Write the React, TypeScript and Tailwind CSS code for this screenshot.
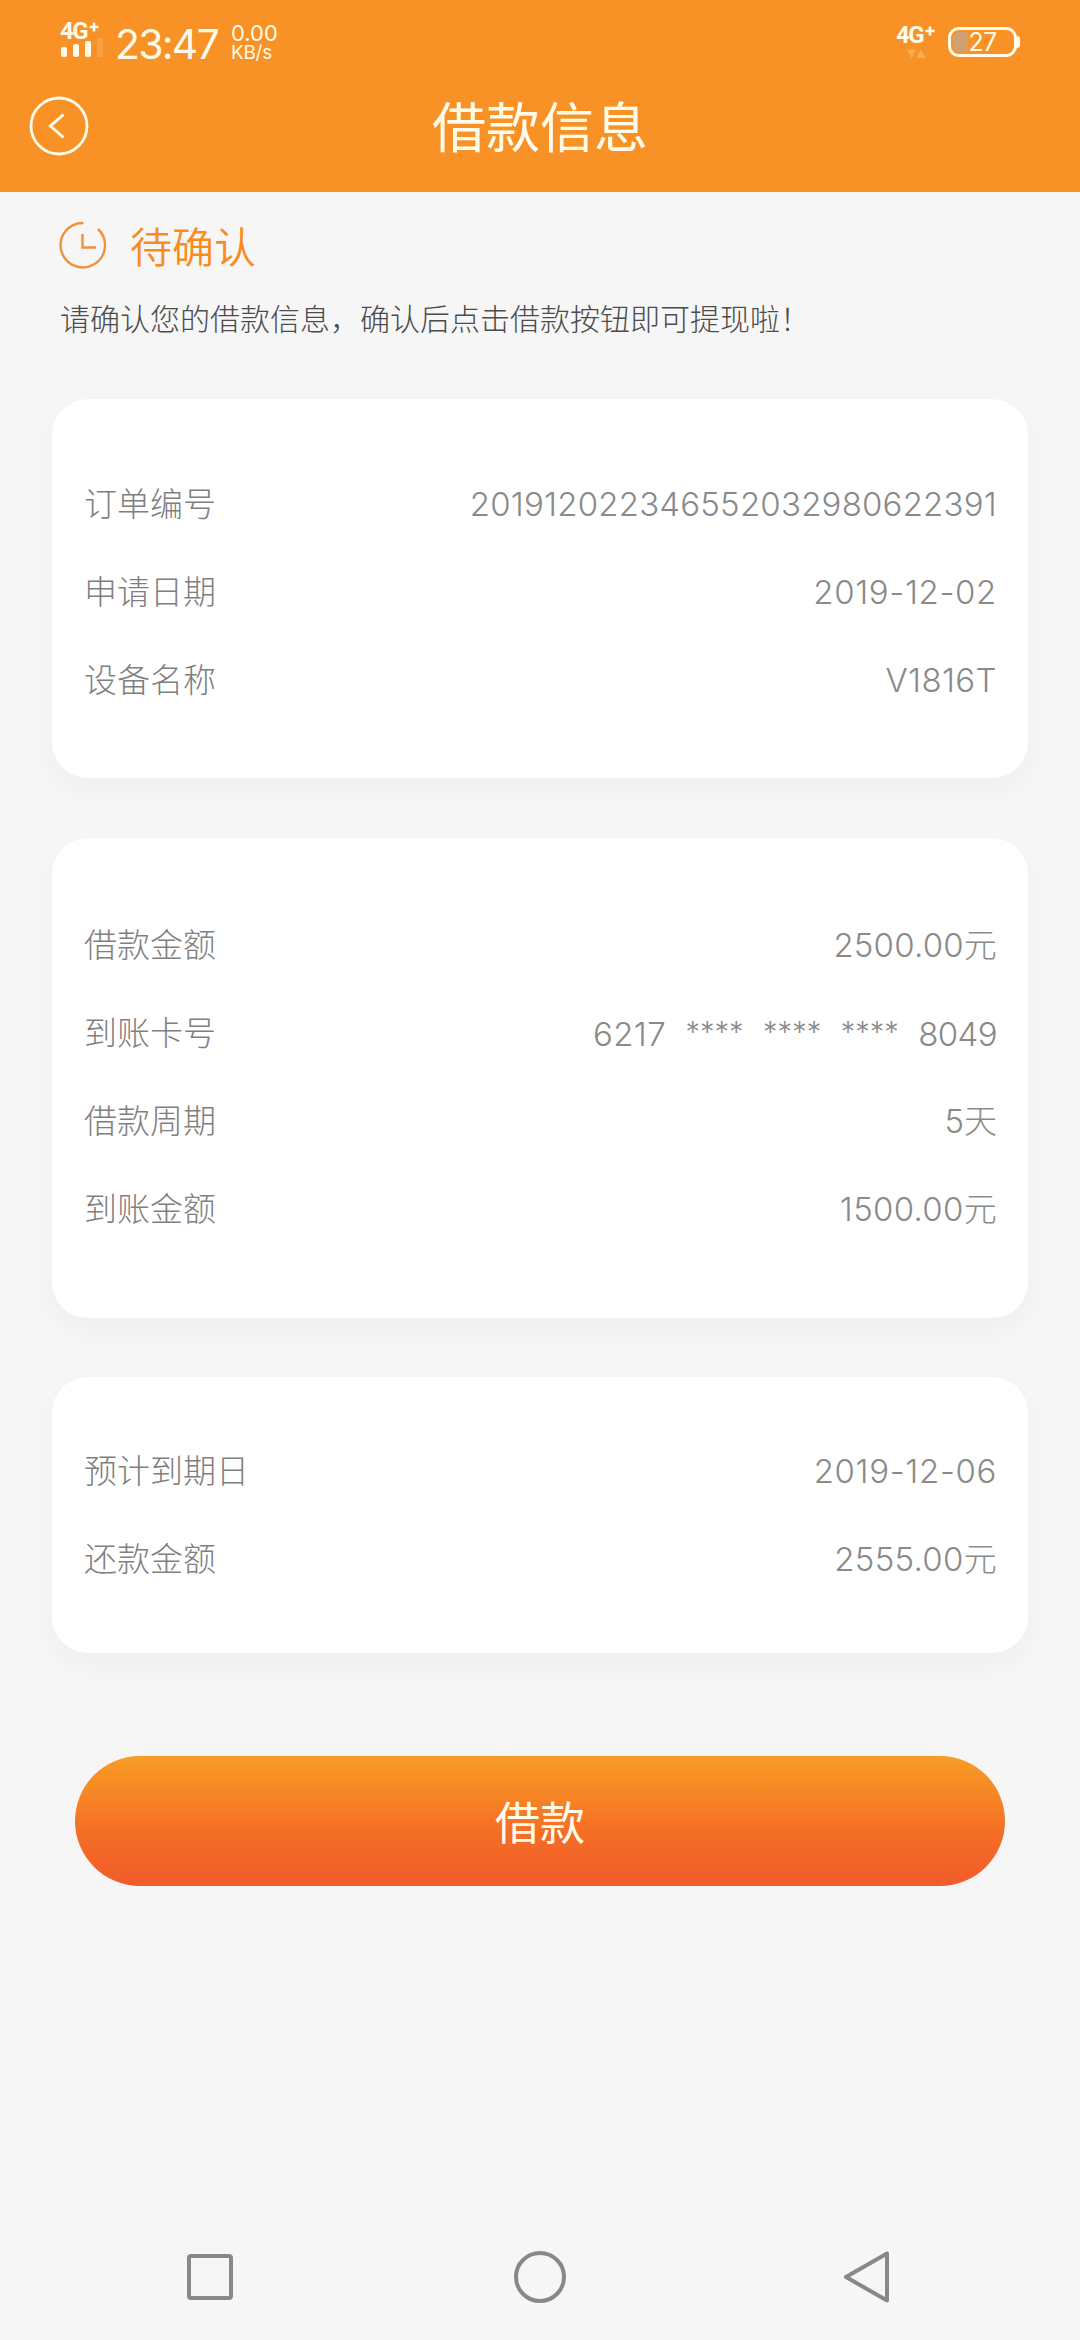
import { clsx } from 'clsx';

type Row = { label: string; value: string; className?: string };

const ORDER_ROWS: Row[] = [
  { label: '订单编号', value: '201912022346552032980622391', className: 'tracking-[0.2px]' },
  { label: '申请日期', value: '2019-12-02', className: 'tracking-[0.65px]' },
  { label: '设备名称', value: 'V1816T', className: 'tracking-[0.4px]' },
];

const LOAN_ROWS: Row[] = [
  { label: '借款金额', value: '2500.00元', className: 'tracking-[0.2px]' },
  { label: '到账卡号', value: '6217 **** **** **** 8049' },
  { label: '借款周期', value: '5天' },
  { label: '到账金额', value: '1500.00元', className: 'tracking-[0.3px]' },
];

const REPAY_ROWS: Row[] = [
  { label: '预计到期日', value: '2019-12-06', className: 'tracking-[0.65px]' },
  { label: '还款金额', value: '2555.00元', className: 'tracking-[0.3px]' },
];

function NetworkLabel() {
  return (
    <div className="flex h-[18px] items-start font-['Roboto'] font-bold">
      <span className="text-[24px] leading-[18px] tracking-[-1.5px]">4G</span>
      <svg width="10" height="10" viewBox="0 0 10 10" className="ml-0.5">
        <path d="M5 0.5v9M0.5 5h9" stroke="currentColor" strokeWidth="2.6" />
      </svg>
    </div>
  );
}

function StatusBar() {
  return (
    <div className="flex h-[84px] items-start justify-between pl-[60px] pr-[60px] font-['Inter']">
      <div className="flex items-start">
        <div className="w-[44px] pt-[22px]">
          <NetworkLabel />
          <svg width="44" height="20" viewBox="0 0 44 20" className="-mt-0.5" fill="currentColor">
            <rect x="1" y="9" width="6" height="10" rx="2" />
            <rect x="13" y="6" width="6" height="13" rx="2" />
            <rect x="25" y="3" width="6" height="16" rx="2" />
            <rect x="37" y="0" width="6" height="19" rx="1" opacity="0.15" />
          </svg>
        </div>
        <span className="mt-[24px] ml-[11px] w-[104px] text-[41px] leading-[40px] tracking-[-1.8px]">23:47</span>
        <div className="mt-[23px] ml-[12px] flex flex-col">
          <span className="text-[22px] leading-[20px]">0.00</span>
          <span className="text-[19px] leading-[20px] tracking-[-0.3px]">KB/s</span>
        </div>
      </div>
      <div className="flex items-start">
        <div className="w-[52px] pt-[26px]">
          <NetworkLabel />
          <svg width="20" height="10" viewBox="0 0 20 10" className="mt-[5px] ml-[11px]" fill="currentColor" opacity="0.25">
            <path d="M0 0.5h9L4.5 9zM9.5 9h9L14 0.5z" />
          </svg>
        </div>
        <div className="mt-[27px] flex items-center">
          <div className="flex h-[30px] w-[69px] items-center justify-center rounded-[11px] border-3 border-current bg-linear-to-r from-[#cfa276] from-[16px] to-transparent to-[17px] bg-clip-content p-0.5">
            <span className="text-[25px] leading-[24px] tracking-[-0.8px]">27</span>
          </div>
          <div className="h-3 w-[3px] rounded-r-full bg-current" />
        </div>
      </div>
    </div>
  );
}

function TitleBar() {
  return (
    <div className="grid h-[84px] grid-cols-[200px_1fr_200px] items-center">
      <button aria-label="返回" className="ml-[29px] w-[60px]">
        <svg width="60" height="60" viewBox="0 0 60 60" fill="none" stroke="currentColor" strokeWidth="2.8">
          <circle cx="30" cy="30" r="28" />
          <path d="M34.5 18.500 21.500 30 34.5 41.500" strokeWidth="3" />
        </svg>
      </button>
      <h1 className="pt-[6px] text-center text-[54px] leading-[78px] font-normal">借款信息</h1>
    </div>
  );
}

// Masked groups are set smaller and tighter than the visible digits.
function CardNumber({ value }: { value: string }) {
  return (
    <span className="flex gap-[19.5px]">
      {value.split(' ').map((group, i) => (
        <span
          key={i}
          className={clsx(
            group.startsWith('*') ? 'text-[29px] leading-[44px]' : 'leading-[48px]',
            i === 0 ? 'tracking-[0.4px]' : i === 4 && 'tracking-[-0.6px]',
          )}
        >
          {group}
        </span>
      ))}
    </span>
  );
}

function InfoCard({ rows, className }: { rows: Row[]; className?: string }) {
  return (
    <section
      className={clsx(
        'mx-[52px] rounded-[36px] bg-white pr-[31px] pl-[32px] shadow-[0_12px_24px_rgba(0,0,0,0.03)]',
        className,
      )}
    >
      {rows.map((row) => (
        <div key={row.label} className="flex h-[88px] items-center justify-between text-[33px] font-light text-[#7f7f7f]">
          <span>{row.label}</span>
          <span className={clsx('text-[#8a8a8a]', row.className)}>
            {row.value.includes('*') ? <CardNumber value={row.value} /> : row.value}
          </span>
        </div>
      ))}
    </section>
  );
}

function NavBar() {
  return (
    <nav className="mt-auto flex h-[126px] items-center justify-between px-[183px] text-[#888]">
      <svg width="54" height="54" viewBox="0 0 54 54" fill="none" stroke="currentColor" strokeWidth="4">
        <rect x="6" y="6" width="42" height="42" rx="2" />
      </svg>
      <svg width="54" height="54" viewBox="0 0 54 54" fill="none" stroke="currentColor" strokeWidth="4">
        <circle cx="27" cy="27" r="24" />
      </svg>
      <svg width="54" height="54" viewBox="0 0 54 54" fill="none" stroke="currentColor" strokeWidth="4" strokeLinejoin="round">
        <path d="M44 3.500v47L3 27z" />
      </svg>
    </nav>
  );
}

export default function App() {
  return (
    <div className="flex h-[2340px] w-[1080px] flex-col bg-[#f6f6f6] font-['Inter','Noto_Sans_CJK_SC',sans-serif]">
      <header className="h-[192px] bg-[#f89226] text-[#fffbea]">
        <StatusBar />
        <TitleBar />
      </header>

      <div className="mt-[24px] flex h-[60px] items-center pl-[58px] text-[#f0923a]">
        <svg width="50" height="50" viewBox="0 0 50 50" fill="none" stroke="currentColor" strokeWidth="2.4" className="-mt-0.5">
          <path d="M25.500 3A22.200 22.200 0 1 0 40 9" />
          <path d="M24.500 14v13.500h13.500" />
        </svg>
        <h2 className="ml-[22px] pt-[3px] text-[42px] leading-[60px] font-[350] text-[#f98c1e]">待确认</h2>
      </div>
      <p className="mt-[20px] pl-[60px] text-[30px] leading-[46px] font-light text-[#4c4c4c]">
        请确认您的借款信息，确认后点击借款按钮即可提现啦！
      </p>

      <InfoCard rows={ORDER_ROWS} className="mt-[57px] h-[379px] pt-[62px]" />
      <InfoCard rows={LOAN_ROWS} className="mt-[60px] h-[480px] pt-[64px]" />
      <InfoCard rows={REPAY_ROWS} className="mt-[59px] h-[276px] pt-[51px]" />

      <button className="mx-[75px] mt-[103px] h-[130px] rounded-full bg-linear-to-b from-[#f89c25] via-[#f46d25] via-60% to-[#f15b2a] pt-[6px] text-[45px] text-[#fffbea]">
        借款
      </button>

      <NavBar />
    </div>
  );
}
